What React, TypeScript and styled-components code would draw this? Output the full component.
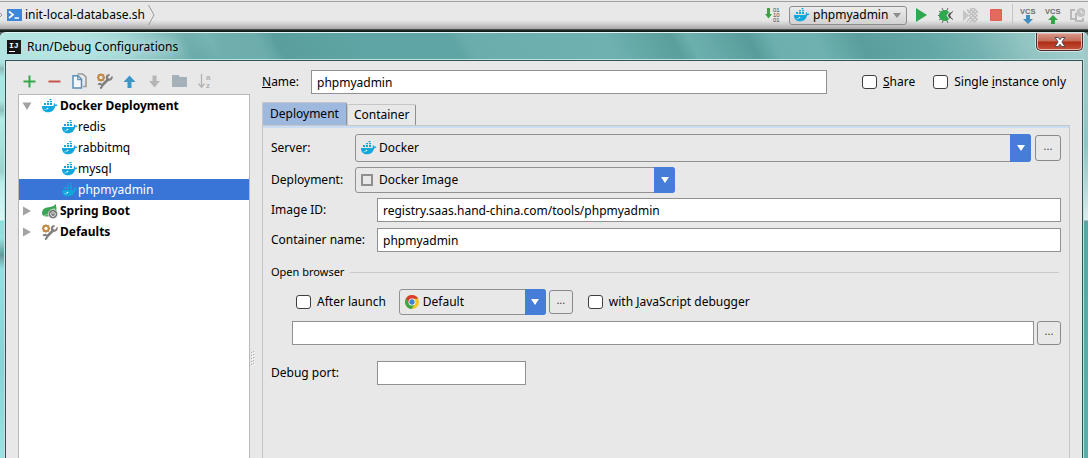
import React, { useState } from "react";
import styled, { createGlobalStyle, css } from "styled-components";

const Global = createGlobalStyle`
  *, *::before, *::after { box-sizing: border-box; }
  body { margin: 0; background: #e8e8e8; }
  body, button, input, select { font: 12px/16px "Noto Sans", "Open Sans", sans-serif; color: #000; }
  button, input, select { margin: 0; }
  svg { display: block; flex: none; }
`;

const Page = styled.div`
  min-height: 100vh;
  display: flex;
  flex-direction: column;
  background: #5a6868;
`;

/* ---------- IDE toolbar ---------- */

const MainBar = styled.header`
  flex: none;
  height: 32px;
  padding: 0 2px 2px 0;
  display: flex;
  align-items: center;
  background:
    linear-gradient(#9f9f9f, #9f9f9f) 0 1px / 100% 1px no-repeat,
    linear-gradient(#666, #333 1px, #0f1c1c 2px, #0f1c1c) 0 29px / 100% 3px no-repeat,
    linear-gradient(#e8e8e8 20px, #d6d6d6 23px, #a8a8a8 29px);
`;

const Crumb = styled.div`
  flex: 1;
  display: flex;
  align-items: center;
  gap: 3px;
`;

const Tools = styled.div`
  display: flex;
  align-items: center;
  gap: 8px;
`;

const ToolButton = styled.button`
  width: 17px;
  height: 18px;
  padding: 0;
  border: 0;
  background: none;
  display: flex;
  align-items: center;
  justify-content: center;
`;

const ToolSeparator = styled.span`
  width: 1px;
  height: 22px;
  margin-right: -2px;
  background: #c4c4c4;
`;

const RunnerBox = styled.div`
  position: relative;
  width: 118px;
  height: 19px;
  margin-right: -3px;
  svg { position: absolute; top: 1px; left: 5px; pointer-events: none; }
  svg + svg { top: 7px; left: 104px; }
  select {
    appearance: none;
    width: 100%;
    height: 19px;
    padding: 0 14px 0 23px;
    border: 1px solid #8c8c8c;
    border-radius: 3px;
    background: linear-gradient(#ececec, #d2d2d2);
  }
`;

/* ---------- dialog ---------- */

const Dialog = styled.section`
  flex: 1;
  display: flex;
  flex-direction: column;
  padding: 0 5px;
  border-top: 1px solid #e2f3f3;
  border-radius: 6px 6px 0 0;
  background:
    linear-gradient(#a5c9c9, #9acaca 70px, #8dc6c4 110px, #a9d2d2 140px, #dcecec 187px, #5da5a4 188px, #63aaaa) right top / 5px 100% no-repeat,
    linear-gradient(#b3e5e3 25px, #a9e0dd 30px, #8cbcba 36px, #a5e8e4 44px, #a9e6e2 68px, #8cc0be 77px, #b0ece8 86px, #a7e2df 110px, #9bd4d1 138px, #b9efec 150px, #d9f7f5 187px, #8adedb 188px, #8fe4e1 205px, #5f9b9a 222px, #8be4e3 236px, #80d7d5 330px, #93e6e4) left top / 5px 100% no-repeat,
    linear-gradient(90deg, #b2e3e1, #b2e3e1 80px, #b2e3e100 220px) 0 0 / 100% 28px no-repeat,
    linear-gradient(62deg, #7fbcba 10%, #5b9f9d 18%, #6fb0ae 20%, #6cadac 24.5%, #5a9f9e 26%, #60a5a5 34%, #60a5a5 42%, #6aadac 43.5%, #6eb1b0 56%, #5b9f9d 62%, #6cb0ae 63.6%, #68abaa 65%, #589d9b 69%, #6cafae 71%, #6eb1b0 75%, #5a9f9d 79%, #63a8a7 85%, #72b1b0 89%, #93c5c3 94%, #a5cfcf) 0 0 / 100% 28px no-repeat,
    #70b1b0;
`;

const TitleBar = styled.div`
  height: 27px;
  padding-left: 2px;
  display: flex;
  align-items: center;
  gap: 6px;
`;

const Title = styled.h1`
  flex: 1;
  margin: 0;
  font-size: 12px;
  line-height: 16px;
  font-weight: 400;
  text-shadow: 0 0 8px #cdecea, 0 0 12px #cdecea;
`;

const CloseButton = styled.button`
  align-self: flex-start;
  width: 47px;
  height: 18px;
  padding: 0;
  border: 1px solid #4c2a28;
  border-top: 0;
  border-radius: 0 0 5px 5px;
  background: linear-gradient(#d99c8d, #c56a56 8px, #ad2c14 9px, #c9503a);
  box-shadow: inset 0 0 0 1px #e8b9ae, 0 0 0 1px #cfe4e4;
  display: flex;
  align-items: center;
  justify-content: center;
`;

const Client = styled.div`
  flex: 1;
  display: flex;
  padding: 9px 12px 0;
  border: 1px solid #2f5557;
  border-bottom: 0;
  background: #e8e8e8;
  box-shadow: 0 0 0 1px #bfe0df;
`;

const Side = styled.div`
  flex: none;
  width: 232px;
  display: flex;
  flex-direction: column;
`;

const SideTools = styled.div`
  height: 24px;
  padding: 0 3px 2px;
  display: flex;
  align-items: center;
  gap: 8px;
`;

const Tree = styled.ul`
  flex: 1;
  margin: 0;
  padding: 0;
  list-style: none;
  border: 1px solid #b9b9b9;
  border-bottom: 0;
  background: #fff;
`;

const TreeRow = styled.li<{ $level?: number; $selected?: boolean }>`
  height: 21px;
  display: flex;
  align-items: center;
  gap: ${(p) => (p.$level ? 0 : 2)}px;
  padding-left: ${(p) => (p.$level ? 43 : 3)}px;
  font-weight: ${(p) => (p.$level ? 400 : 700)};
  ${(p) => p.$selected && css`background: #3875d7; color: #fff;`}
`;

const TreeToggle = styled.button`
  width: 18px;
  height: 16px;
  padding: 0;
  border: 0;
  background: none;
`;

const Splitter = styled.div`
  flex: none;
  width: 12px;
  display: flex;
  padding: 281px 0 0 1px;
`;

const Main = styled.main`
  flex: 1;
  min-width: 0;
  display: flex;
  flex-direction: column;
`;

const NameRow = styled.div`
  display: flex;
  align-items: center;
  padding-right: 4px;
`;

const FieldLabel = styled.label<{ $width: number }>`
  flex: none;
  width: ${(p) => p.$width}px;
`;

const TextInput = styled.input<{ $width?: number }>`
  ${(p) => (p.$width ? css`flex: none; width: ${p.$width}px;` : css`flex: 1; min-width: 0;`)}
  height: 24px;
  padding: 0 5px;
  border: 1px solid #919191;
  border-radius: 0;
  background: #fff;
  outline: none;
`;

const Check = styled.label<{ $gap: number }>`
  flex: none;
  display: flex;
  align-items: center;
  gap: 6px;
  margin-left: ${(p) => p.$gap}px;
  input {
    appearance: none;
    width: 15px;
    height: 14px;
    border: 1px solid #3f3f3f;
    border-radius: 3px;
    background: #fff;
  }
  input:checked { background: #467dd9; }
`;

const Tabs = styled.div`
  height: 23px;
  margin-top: 8px;
  display: flex;
  align-items: flex-end;
`;

const Tab = styled.button<{ $active: boolean }>`
  height: ${(p) => (p.$active ? 23 : 21)}px;
  padding: 0 ${(p) => (p.$active ? 7 : 6)}px;
  border: 1px solid #c6c6c6;
  border-right-color: #8f8f8f;
  border-bottom: 0;
  border-radius: 2px 2px 0 0;
  background: ${(p) => (p.$active ? "#9fb8de" : "#e8e8e8")};
`;

const Panel = styled.div`
  flex: 1;
  padding: 6px 8px 20px;
  border: 1px solid #c6c6c6;
  border-bottom: 0;
  background: linear-gradient(#c9ddf4, #c9ddf4) 0 0 / 100% 2px no-repeat;
  display: flex;
  flex-direction: column;
`;

const Row = styled.div<{ $top?: number; $indent?: number }>`
  display: flex;
  align-items: center;
  margin-top: ${(p) => p.$top ?? 0}px;
  padding-left: ${(p) => p.$indent ?? 0}px;
`;

const Combo = styled.div<{ $width?: number; $height: number; $left: number }>`
  position: relative;
  ${(p) => (p.$width ? css`flex: none; width: ${p.$width}px;` : css`flex: 1; min-width: 0;`)}
  height: ${(p) => p.$height}px;
  select {
    appearance: none;
    width: 100%;
    height: 100%;
    padding: 0 26px 0 ${(p) => p.$left}px;
    border: 1px solid #919191;
    border-radius: 3px;
    background: #e8e8e8;
    outline: none;
  }
`;

const ComboIcon = styled.span`
  position: absolute;
  top: 0;
  bottom: 0;
  left: 6px;
  display: flex;
  align-items: center;
  pointer-events: none;
`;

const ComboArrow = styled.span`
  position: absolute;
  top: 0;
  right: 0;
  bottom: 0;
  width: 21px;
  border-radius: 0 3px 3px 0;
  background: #467dd9;
  display: flex;
  align-items: center;
  justify-content: center;
  pointer-events: none;
`;

const MoreButton = styled.button<{ $gap: number }>`
  flex: none;
  width: ${(p) => (p.$gap > 3 ? 26 : 24)}px;
  height: ${(p) => (p.$gap > 3 ? 26 : 24)}px;
  margin-left: ${(p) => p.$gap}px;
  padding: 0 0 4px;
  border: 1px solid #8a8a8a;
  border-radius: 3px;
  background: #e8e8e8;
  color: #444;
  font-size: 11px;
`;

const Section = styled.h2`
  margin: 12px 0 0;
  padding-right: 2px;
  display: flex;
  align-items: center;
  gap: 6px;
  font-size: 11px;
  line-height: 16px;
  font-weight: 400;
  &::after { content: ""; flex: 1; height: 1px; background: #cacaca; }
`;

const Glyphs = styled.text`
  font-family: "Liberation Sans", sans-serif;
`;

/* ---------- icons ---------- */

const DockerIcon = () => (
  <svg width="16" height="16" viewBox="0 0 16 16">
    <path fill="#12a7dc" d="M0 8h11.200c.6-.3.8-.8.6-1.500-.1-.6 0-1.100.4-1.500.6.4.9 1 1 1.700.8-.2 1.600-.1 2.300.3-.4.900-1.200 1.300-2.400 1.300C12.200 12.200 10 14.300 6 14.300 2.300 14.300 0 12 0 8z" />
    <path fill="#12a7dc" d="M2 5h2v2H2zM5 5h2v2H5zM8 5h2v2H8zM5 3h2v1.300H5zM8 3h2v1.300H8zM7.500 1h2v1.200h-2z" />
    <path fill="none" stroke="#fff" strokeWidth=".7" opacity=".7" d="M2.500 11.700c1 .2 2-.1 2.600-.6" />
    <circle cx="5.500" cy="10.500" r=".8" fill="#fff" />
  </svg>
);

const TerminalIcon = () => (
  <svg width="15" height="12" viewBox="0 0 15 12">
    <path fill="#3f86d8" d="M0 0h15v12H0z" />
    <path fill="none" stroke="#fff" strokeWidth="1.700" d="M2 2.500l4 3.200L2 9M7.500 9H12" />
  </svg>
);

const ChevronIcon = ({ flip }: { flip?: boolean }) => (
  <svg width={flip ? 4 : 7} height="20" viewBox={flip ? "3 0 4 20" : "0 0 7 20"}>
    <path fill="none" stroke="#9a9a9a" d={flip ? "M2 7l3 3-3 3" : "M.5 0L6 10 .5 20"} />
  </svg>
);

const BinaryIcon = () => (
  <svg width="16" height="16" viewBox="0 0 16 16">
    <path fill="#39a347" d="M2 1h3v6h2l-3.500 4.500L0 7h2z" />
    <Glyphs x="8" y="5" fontSize="6" fill="#444">01</Glyphs>
    <Glyphs x="8" y="10" fontSize="6" fill="#444">10</Glyphs>
    <Glyphs x="8" y="15" fontSize="6" fill="#444">01</Glyphs>
  </svg>
);

const RunIcon = () => (
  <svg width="12" height="14" viewBox="0 0 12 14"><path fill="#2fa84f" d="M1 0l11 7L1 14z" /></svg>
);

const BugIcon = () => (
  <svg width="15" height="15" viewBox="0 0 15 15">
    <path fill="none" stroke="#666" d="M4 0l1.500 3M10 0L8.500 3M1 3l3 2M1 12l3-2M4 15l1.500-3M10 15l-1.500-3M0 7.500h3" />
    <path fill="#2fa84f" d="M7 2c2 0 3.300 1 4 2L8.500 7.500 11 11c-.7 1-2 2-4 2-3.700 0-6-2.500-6-5.500S3.300 2 7 2z" />
    <path fill="#555" d="M11.600 4.500c1 0 1.500.5 1.800 1.200L12 7.500l1.400 1.800c-.3.700-.8 1.200-1.800 1.200L9.800 7.500z" />
    <path fill="none" stroke="#555" d="M12.800 5L15 3.500M12.800 10l2.200 1.500" />
  </svg>
);

const CoverageIcon = () => (
  <svg width="15" height="15" viewBox="0 0 15 15">
    <path fill="#c4c4c4" d="M0 2l6 5.500L0 13z" />
    <path fill="none" stroke="#bdbdbd" strokeWidth="1.300" d="M4 1.500l10 10M7 .5l7.500 7.500M10.500 0L15 4.500M6 8l6 6M4 13.500l10-10M7 14.500L14.500 7M10.500 15l4.500-4.500M5 5l5-5M6 8l6-6" />
  </svg>
);

const StopIcon = () => (
  <svg width="12" height="12" viewBox="0 0 12 12"><path fill="#e36b5d" stroke="#db6153" d="M.5.5h11v11H.5z" /></svg>
);

const VcsIcon = ({ up }: { up?: boolean }) => (
  <svg width="16" height="17" viewBox="0 0 16 17">
    <Glyphs x="0" y="7" fontSize="7.500" fontWeight="700" fill="#6b6b6b">VCS</Glyphs>
    {up ? <path fill="#39a347" d="M8 8l5 5h-3v4H6v-4H3z" /> : <path fill="#3f8fc0" d="M6 8h4v4h3l-5 5-5-5h3z" />}
  </svg>
);

const HistoryIcon = () => (
  <svg width="15" height="15" viewBox="0 0 15 15">
    <path fill="none" stroke="#b9b9b9" strokeWidth="2" d="M5 2H1v9h4M6 5v8h7v-3" />
    <circle cx="11" cy="4.500" r="4.500" fill="#c2c2c2" />
    <path fill="none" stroke="#e8e8e8" d="M11 2v3h2.500" />
  </svg>
);

const IdeaIcon = () => (
  <svg width="14" height="14" viewBox="0 0 14 14">
    <path fill="#151515" d="M0 0h14v14H0z" />
    <text x="2" y="8" fontFamily="Liberation Mono, monospace" fontSize="8" fontWeight="700" fill="#fff">IJ</text>
    <path fill="#fff" d="M2 11h6v1H2z" />
  </svg>
);

const CloseIcon = () => (
  <svg width="12" height="10" viewBox="0 0 12 10">
    <path fill="#fff" stroke="#4b4b5c" d="M1 .5h3.300L6 2.700 7.700.5H11L7.900 5 11 9.500H7.700L6 7.300 4.300 9.500H1L4.100 5z" />
  </svg>
);

const PlusIcon = () => (
  <svg width="13" height="13" viewBox="0 0 13 13"><path fill="#37a64a" d="M5.500.5h2v5h5v2h-5v5h-2v-5h-5v-2h5z" /></svg>
);
const MinusIcon = () => (
  <svg width="13" height="13" viewBox="0 0 13 13"><path fill="#c9544b" d="M.5 5.500h12v2H.5z" /></svg>
);
const CopyIcon = () => (
  <svg width="15" height="16" viewBox="0 0 15 16">
    <path fill="none" stroke="#9a9a9a" strokeWidth="1.600" d="M5.500 1h5.200L14 4v9.500h-3" />
    <path fill="#f4f7f9" stroke="#5b8fb3" strokeWidth="1.500" d="M1 2.800h5l3.500 3.400V15H1z" />
    <path fill="none" stroke="#5b8fb3" strokeWidth="1.200" d="M5.800 3v3.600h3.500" />
  </svg>
);
const WrenchIcon = () => (
  <svg width="16" height="16" viewBox="0 0 16 16">
    <path fill="none" stroke="#808080" strokeWidth="2.600" d="M5 12.500L12 5.500" />
    <path fill="none" stroke="#808080" strokeWidth="2" d="M14.800 3.500c.3 2-1 3.300-2.700 3.300-1.500 0-2.300-1-2.300-2.200 0-1.500 1-2.600 2.700-2.600" />
    <path fill="none" stroke="#808080" strokeWidth="2" d="M1.500 12c.5-1.700 3.500-1.500 3.500.8 0 1.500-.8 2.200-2 2.500" />
    <circle cx="4" cy="4.500" r="2.700" fill="none" stroke="#c28a45" strokeWidth="2" />
    <path fill="none" stroke="#c28a45" strokeWidth="1.400" d="M4 .5v1.200M4 7.400v1.200M0 4.500h1.200M7 4.500h1.200M1 1.500l.8.800M6.200 6.700l.8.800M1 7.500l.8-.8M6.200 2.300l.8-.8" />
  </svg>
);
const ArrowIcon = ({ down }: { down?: boolean }) => (
  <svg width="13" height="13" viewBox="0 0 13 13">
    {down ? <path fill="#b5b5b5" d="M4.500.5h4v5.500H12l-5.500 6.500L1 6h3.500z" /> : <path fill="#3e96c6" d="M6.500.5L12.500 7H8.500v6h-4V7H.5z" />}
  </svg>
);
const FolderIcon = () => (
  <svg width="15" height="12" viewBox="0 0 15 12"><path fill="#a5b1b8" d="M0 0h6.500l1.500 2h7v10H0z" /></svg>
);
const SortIcon = () => (
  <svg width="14" height="18" viewBox="0 0 14 18">
    <path fill="none" stroke="#b3b3b3" strokeWidth="1.300" d="M3.500 2v13M.5 11.500l3 3.800 3-3.800" />
    <Glyphs x="8" y="8" fontSize="8" fontWeight="700" fill="#b3b3b3">a</Glyphs>
    <Glyphs x="8" y="16" fontSize="8" fontWeight="700" fill="#b3b3b3">z</Glyphs>
  </svg>
);
const SpringIcon = () => (
  <svg width="16" height="16" viewBox="0 0 16 16">
    <path fill="#3aa655" d="M0 10.500C0 5 4 4.500 8 4 11 3.600 12.500 3 13.500.8 14.600 4 15 7 13.800 9.500 11.500 13.500 4 14.500.8 12.500z" />
    <path fill="none" stroke="#bfe3c8" strokeWidth=".7" d="M1.500 12.500C6 12 10.500 9.500 12.500 5" />
    <circle cx="11" cy="11" r="4.700" fill="#777" stroke="#fff" strokeWidth=".6" />
    <path fill="none" stroke="#fff" strokeWidth=".9" d="M9.500 9.400a2.300 2.300 0 1 0 3 0M11 8v3" />
  </svg>
);
const ChromeIcon = () => (
  <svg width="14" height="14" viewBox="0 0 14 14">
    <circle cx="7" cy="7" r="7" fill="#f5c518" />
    <path fill="#db3a2f" d="M.9 3.500A7 7 0 0 1 13.100 3.700H7L4 8.800z" />
    <path fill="#3fa648" d="M.9 3.500A7 7 0 0 0 6.600 14L10 8.700 4.200 8.600z" />
    <circle cx="7" cy="7" r="3.500" fill="#fff" />
    <circle cx="7" cy="7" r="2.700" fill="#3f80cf" />
  </svg>
);
const SquareIcon = () => (
  <svg width="12" height="12" viewBox="0 0 12 12"><path fill="none" stroke="#8f8f8f" strokeWidth="2" d="M1 1h10v10H1z" /></svg>
);
const DownIcon = ({ color = "#fff", width = 8, height = 6 }) => (
  <svg width={width} height={height} viewBox="0 0 8 6" preserveAspectRatio="none"><path fill={color} d="M0 0h8L4 6z" /></svg>
);
const ToggleIcon = ({ open }: { open?: boolean }) => (
  <svg width="10" height="10" viewBox="0 0 10 10"><path fill="#a3a3a3" d={open ? "M.5 1.500h9L5 9z" : "M1 .5L9 5 1 9.500z"} /></svg>
);
const GripIcon = () => (
  <svg width="4" height="15" viewBox="0 0 4 15">
    <path stroke="#aaa" strokeDasharray="1 2" d="M.5 1v14M2.500 0v14" />
    <path stroke="#fff" strokeDasharray="1 2" d="M1.500 2v13M3.500 1v13" />
  </svg>
);

/* ---------- page ---------- */

const configs = ["redis", "rabbitmq", "mysql", "phpmyadmin"];

const sideTools = [
  { name: "Add", icon: <PlusIcon /> },
  { name: "Remove", icon: <MinusIcon /> },
  { name: "Copy", icon: <CopyIcon /> },
  { name: "Edit defaults", icon: <WrenchIcon /> },
  { name: "Move up", icon: <ArrowIcon /> },
  { name: "Move down", icon: <ArrowIcon down /> },
  { name: "New folder", icon: <FolderIcon /> },
  { name: "Sort", icon: <SortIcon /> },
];

type PickerProps = {
  id: string;
  label?: string;
  value: string;
  icon: React.ReactNode;
  width?: number;
  height?: number;
  left?: number;
};

const Picker = ({ id, label, value, icon, width, height = 26, left = 23 }: PickerProps) => (
  <Combo $width={width} $height={height} $left={left}>
    <select id={id} aria-label={label}><option>{value}</option></select>
    <ComboIcon>{icon}</ComboIcon>
    <ComboArrow><DownIcon /></ComboArrow>
  </Combo>
);

export default function App() {
  const [tab, setTab] = useState("Deployment");
  const [selected, setSelected] = useState("phpmyadmin");

  return (
    <Page>
      <Global />
      <MainBar>
        <Crumb>
          <ChevronIcon flip />
          <TerminalIcon />
          <span>init-local-database.sh</span>
          <ChevronIcon />
        </Crumb>
        <Tools>
          <ToolButton aria-label="Make project"><BinaryIcon /></ToolButton>
          <RunnerBox>
            <select aria-label="Run configuration"><option>phpmyadmin</option></select>
            <DockerIcon />
            <DownIcon color="#8c8c8c" width={8} height={5} />
          </RunnerBox>
          <ToolButton aria-label="Run"><RunIcon /></ToolButton>
          <ToolButton aria-label="Debug"><BugIcon /></ToolButton>
          <ToolButton aria-label="Run with coverage"><CoverageIcon /></ToolButton>
          <ToolButton aria-label="Stop"><StopIcon /></ToolButton>
          <ToolSeparator />
          <ToolButton aria-label="Update project"><VcsIcon /></ToolButton>
          <ToolButton aria-label="Commit changes"><VcsIcon up /></ToolButton>
          <ToolButton aria-label="Show history"><HistoryIcon /></ToolButton>
        </Tools>
      </MainBar>

      <Dialog aria-labelledby="dialog-title">
        <TitleBar>
          <IdeaIcon />
          <Title id="dialog-title">Run/Debug Configurations</Title>
          <CloseButton aria-label="Close"><CloseIcon /></CloseButton>
        </TitleBar>
        <Client>
          <Side>
            <SideTools>
              {sideTools.map((t) => (
                <ToolButton key={t.name} aria-label={t.name}>{t.icon}</ToolButton>
              ))}
            </SideTools>
            <Tree>
              <TreeRow>
                <TreeToggle aria-label="Collapse"><ToggleIcon open /></TreeToggle>
                <DockerIcon />
                Docker Deployment
              </TreeRow>
              {configs.map((c) => (
                <TreeRow key={c} $level={1} $selected={c === selected} onClick={() => setSelected(c)}>
                  <DockerIcon />
                  {c}
                </TreeRow>
              ))}
              <TreeRow>
                <TreeToggle aria-label="Expand"><ToggleIcon /></TreeToggle>
                <SpringIcon />
                Spring Boot
              </TreeRow>
              <TreeRow>
                <TreeToggle aria-label="Expand"><ToggleIcon /></TreeToggle>
                <WrenchIcon />
                Defaults
              </TreeRow>
            </Tree>
          </Side>
          <Splitter><GripIcon /></Splitter>
          <Main>
            <NameRow>
              <FieldLabel $width={49} htmlFor="name"><u>N</u>ame:</FieldLabel>
              <TextInput id="name" defaultValue="phpmyadmin" />
              <Check $gap={35}><input type="checkbox" /><span><u>S</u>hare</span></Check>
              <Check $gap={18}><input type="checkbox" /><span>Single <u>i</u>nstance only</span></Check>
            </NameRow>
            <Tabs role="tablist">
              {["Deployment", "Container"].map((t) => (
                <Tab key={t} role="tab" aria-selected={tab === t} $active={tab === t} onClick={() => setTab(t)}>{t}</Tab>
              ))}
            </Tabs>
            <Panel role="tabpanel">
              <Row $top={2}>
                <FieldLabel $width={84} htmlFor="server">Server:</FieldLabel>
                <Picker id="server" value="Docker" icon={<DockerIcon />} height={28} />
                <MoreButton $gap={4} aria-label="Server settings">...</MoreButton>
              </Row>
              <Row $top={5}>
                <FieldLabel $width={84} htmlFor="deployment">Deployment:</FieldLabel>
                <Picker id="deployment" value="Docker Image" icon={<SquareIcon />} width={320} />
              </Row>
              <Row $top={5}>
                <FieldLabel $width={106} htmlFor="image">Image ID:</FieldLabel>
                <TextInput id="image" defaultValue="registry.saas.hand-china.com/tools/phpmyadmin" />
              </Row>
              <Row $top={6}>
                <FieldLabel $width={106} htmlFor="container">Container name:</FieldLabel>
                <TextInput id="container" defaultValue="phpmyadmin" />
              </Row>
              <Section>Open browser</Section>
              <Row $top={9} $indent={25}>
                <Check $gap={0}><input type="checkbox" /><span>After launch</span></Check>
                <Row $indent={13}>
                  <Picker id="browser" label="Browser" value="Default" icon={<ChromeIcon />} width={147} />
                </Row>
                <MoreButton $gap={3} aria-label="Browser settings">...</MoreButton>
                <Check $gap={15}><input type="checkbox" /><span>with <u>J</u>avaScript debugger</span></Check>
              </Row>
              <Row $top={6} $indent={21}>
                <TextInput aria-label="Start URL" />
                <MoreButton $gap={3} aria-label="Choose URL">...</MoreButton>
              </Row>
              <Row $top={16}>
                <FieldLabel $width={106} htmlFor="port">Debug port:</FieldLabel>
                <TextInput id="port" $width={149} />
              </Row>
            </Panel>
          </Main>
        </Client>
      </Dialog>
    </Page>
  );
}
